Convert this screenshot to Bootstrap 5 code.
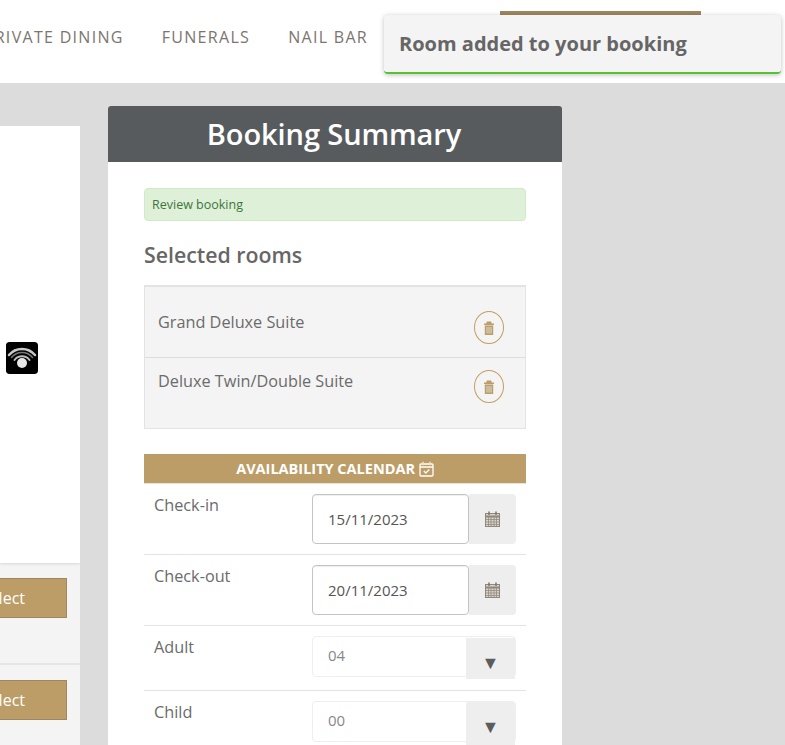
<!DOCTYPE html>
<html lang="en">
<head>
<meta charset="utf-8">
<title>Booking Summary</title>
<link href="https://cdn.jsdelivr.net/npm/bootstrap@5.3.0/dist/css/bootstrap.min.css" rel="stylesheet">
<style>
html,body{height:745px;overflow:hidden}
body{background:#dcdcdc;font-family:"Open Sans",sans-serif;color:#666;position:relative}
.topbar{height:83px;background:#fff;width:785px;overflow:hidden}
.menu-row{height:83px;margin-left:-100px;width:885px;padding-right:417px}
.menu-item{font-size:16px;letter-spacing:1.3px;color:#7b7570;white-space:nowrap;margin-left:38px;margin-top:-9px}
.menu-cta{position:absolute;left:500px;top:11px;width:201px;height:30px;background:#9e865f}
.toaster{position:absolute;left:384px;top:15px;width:397px;height:59px;background:#f4f4f4;border-bottom:2px solid #55c230;border-radius:4px;box-shadow:0 1px 5px rgba(0,0,0,.25);font-size:20px;font-weight:700;color:#666;padding:14px 15px 0;white-space:nowrap}
.page-wrap{width:785px}
.rooms-col{width:80px;margin-top:43px;margin-right:28px;flex:none;overflow:hidden;height:619px}
.room-main{height:437px;background:#fff;position:relative;box-shadow:0 1px 3px rgba(0,0,0,.12)}
.wifi-ico{position:absolute;left:6px;top:216px;width:32px;height:32px;border-radius:3px}
.room-rate{height:102px;background:#f4f4f4;padding:15px 13px 0 0;border-bottom:2px solid #e6e6e6}
.pick-btn{width:120px;height:40px;background:#bc9d67;border:1px solid #9e865f;border-radius:0;color:#fff;font-size:16px;padding:0 41px 0 0;text-align:right;line-height:35px;margin-left:-53px;display:block}
.summary{width:454px;margin-top:23px;background:#fff;border-radius:3px 3px 0 0;flex:none;height:639px;overflow:hidden}
.summary-head{height:56px;background:#585b5d;color:#fff;font-size:29px;font-weight:600;text-align:center;line-height:56px;letter-spacing:-.1px;padding-right:2px}
.summary-body{padding:26px 36px 0 36px}
.note-green{height:33px;background:#dff0d8;border:1px solid #d0e9c6;border-radius:4px;color:#3c763d;font-size:12.5px;padding:0 7px;line-height:32px}
.sel-title{font-size:21.300px;font-weight:600;color:#666;margin:20px 0 16px;line-height:28px}
.sel-list{background:#f4f4f4;border:1px solid #e3e3e3;border-top-width:2px;height:144px}
.sel-row{padding:0 21px 0 13px;font-size:16.250px;color:#6b6b6b}
.sel-row.first{height:71px;border-bottom:1px solid #dedede;padding-top:23px}
.sel-row.second{padding-top:11px}
.bin{width:30px;height:33px;border:1px solid #c29f63;border-radius:50%;margin-top:1px;flex:none}
.cal-title{height:30px;background:#bc9d67;color:#fff;font-size:14.500px;font-weight:700;margin-top:25px;line-height:29px;text-align:center;border-bottom:1px solid #e9e4da}
.form-line{border-bottom:1px solid #e4e4e4;padding:10px;font-size:16.250px;color:#6b6b6b}
.form-line.num-line{padding-bottom:13px}
.line-label{width:158px;flex:none;line-height:22px}
.date-box{width:157px;height:50px;border:1px solid #c4c4c4;border-radius:4px;background:#fff;color:#555;padding:0 15px;line-height:49px;font-size:15px;box-shadow:inset 0 1px 1px rgba(0,0,0,.07)}
.date-add{width:47px;height:50px;background:#eee;border-radius:0 4px 4px 0}
.num-box{width:204px;height:41px;border:1px solid #eee;border-radius:4px;color:#888;font-size:15px;padding:0 15px;line-height:37px;position:relative}
.num-arrow{position:absolute;right:0;top:1px;width:49px;height:41px;background:#eee;color:#5c5c5c;font-size:18px;text-align:center;line-height:48px}
.num-arrow.tall{top:-1px;height:44px;line-height:50px;border-radius:4px 4px 0 0}
</style>
</head>
<body>
<header class="topbar">
  <div class="menu-row d-flex justify-content-end align-items-center">
    <span class="menu-item">PRIVATE DINING</span>
    <span class="menu-item">FUNERALS</span>
    <span class="menu-item">NAIL BAR</span>
  </div>
</header>
<div class="menu-cta"></div>
<div class="toaster">Room added to your booking</div>
<main class="page-wrap d-flex align-items-start">
  <section class="rooms-col">
    <div class="room-main">
      <svg class="wifi-ico" viewBox="0 0 32 32" aria-hidden="true"><rect width="32" height="32" rx="3" fill="#000"/><circle cx="16" cy="21" r="5" fill="#e8e8e8"/><g fill="none" stroke-linecap="round"><path d="M8.500 18a9.500 9.500 0 0 1 15 0" stroke="#bdbdbd" stroke-width="2"/><path d="M5.500 15.500a13.500 13.500 0 0 1 21 0" stroke="#777" stroke-width="1.500"/><path d="M3 13a17 17 0 0 1 26 0" stroke="#c8c8c8" stroke-width="2.500"/></g></svg>
    </div>
    <div class="room-rate"><button class="pick-btn" type="button">Select</button></div>
    <div class="room-rate"><button class="pick-btn" type="button">Select</button></div>
  </section>
  <aside class="summary">
    <div class="summary-head">Booking Summary</div>
    <div class="summary-body">
      <div class="note-green">Review booking</div>
      <div class="sel-title">Selected rooms</div>
      <div class="sel-list">
        <div class="sel-row first d-flex justify-content-between align-items-start">
          <span>Grand Deluxe Suite</span>
          <span class="bin d-flex align-items-center justify-content-center"><svg width="12" height="14" viewBox="0 0 12 14" aria-hidden="true"><path d="M3.500 2.500V1.200Q3.500.5 4.200.5h3.600q.7 0 .7.7v1.300H11v1.500H1V2.500zM1.800 4.500h8.400V14H1.800z" fill="#bc9d67"/><path d="M4 6v6.500M6 6v6.500M8 6v6.500" stroke="#d5dce0" stroke-width="1"/></svg></span>
        </div>
        <div class="sel-row second d-flex justify-content-between align-items-start">
          <span>Deluxe Twin/Double Suite</span>
          <span class="bin d-flex align-items-center justify-content-center"><svg width="12" height="14" viewBox="0 0 12 14" aria-hidden="true"><path d="M3.500 2.500V1.200Q3.500.5 4.200.5h3.600q.7 0 .7.7v1.300H11v1.500H1V2.500zM1.800 4.500h8.400V14H1.800z" fill="#bc9d67"/><path d="M4 6v6.500M6 6v6.500M8 6v6.500" stroke="#d5dce0" stroke-width="1"/></svg></span>
        </div>
      </div>
      <div class="cal-title">AVAILABILITY CALENDAR <svg width="15" height="16" viewBox="0 0 15 16" aria-hidden="true" style="vertical-align:-3px"><rect x="1" y="3" width="13" height="12" rx="1" fill="none" stroke="#fff" stroke-width="1.300"/><path d="M1 6h13" stroke="#fff" stroke-width="1.500"/><path d="M4 .8v3.500M11 .8v3.500" stroke="#f3dfd0" stroke-width="1.500"/><path d="M4.800 10l2 2 3.500-3.500" fill="none" stroke="#fff" stroke-width="1.300"/></svg></div>
      <div class="form-line d-flex">
        <div class="line-label">Check-in</div>
        <div class="date-box">15/11/2023</div>
        <div class="date-add d-flex align-items-center justify-content-center"><svg width="15" height="16" viewBox="0 0 15 16" aria-hidden="true"><rect x=".5" y="2.500" width="14" height="13" fill="#d8d4cc" stroke="#8f877b"/><path d="M.5 5.500h14" stroke="#8f877b" stroke-width="2"/><path d="M3.500 6v9M6 6v9M9 6v9M11.500 6v9M.5 8.500h14M.5 11h14M.5 13.500h14" stroke="#938b80" stroke-width=".8"/><path d="M4 .5v3.500M11 .5v3.500" stroke="#7c7468" stroke-width="1.500"/></svg></div>
      </div>
      <div class="form-line d-flex">
        <div class="line-label">Check-out</div>
        <div class="date-box">20/11/2023</div>
        <div class="date-add d-flex align-items-center justify-content-center"><svg width="15" height="16" viewBox="0 0 15 16" aria-hidden="true"><rect x=".5" y="2.500" width="14" height="13" fill="#d8d4cc" stroke="#8f877b"/><path d="M.5 5.500h14" stroke="#8f877b" stroke-width="2"/><path d="M3.500 6v9M6 6v9M9 6v9M11.500 6v9M.5 8.500h14M.5 11h14M.5 13.500h14" stroke="#938b80" stroke-width=".8"/><path d="M4 .5v3.500M11 .5v3.500" stroke="#7c7468" stroke-width="1.500"/></svg></div>
      </div>
      <div class="form-line num-line d-flex">
        <div class="line-label">Adult</div>
        <div class="num-box">04<span class="num-arrow">▼</span></div>
      </div>
      <div class="form-line num-line d-flex">
        <div class="line-label">Child</div>
        <div class="num-box">00<span class="num-arrow tall">▼</span></div>
      </div>
    </div>
  </aside>
</main>
<script src="https://cdn.jsdelivr.net/npm/bootstrap@5.3.0/dist/js/bootstrap.bundle.min.js"></script>
</body>
</html>
